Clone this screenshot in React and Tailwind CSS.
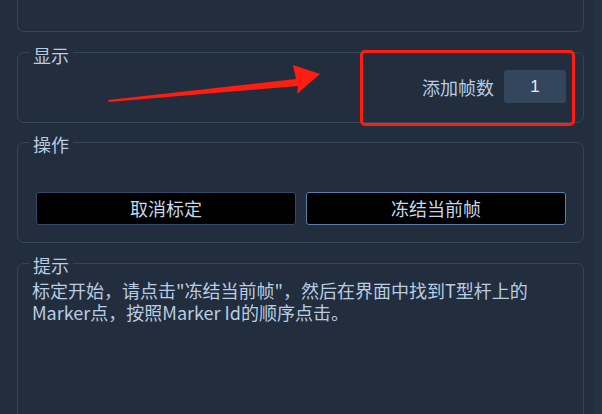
export default function App() {
  const font = { fontFamily: '"Noto Sans CJK SC", "Noto Sans", sans-serif' };
  return (
    <div className="relative flex w-[602px] h-[414px] overflow-hidden bg-[#222e3d] text-[#b8cce2]" style={font}>
      <div className="flex flex-col flex-1 pl-[17px] pr-[10px]">
        {/* top (cut off) group */}
        <div className="shrink-0 h-[32px] border-x border-b border-[#34455a] rounded-b-[7px]" />

        {/* 显示 */}
        <div className="shrink-0 relative mt-[20px] h-[71px] border border-[#34455a] rounded-[7px]">
          <span className="absolute left-[11px] top-[-10px] px-[4px] bg-[#222e3d] text-[18px] leading-[24px]">显示</span>
          <div className="flex justify-end items-center gap-[10px] pt-[17px] pr-[17px]">
            <span className="text-[18px] leading-[24px]">添加帧数</span>
            <div className="w-[62px] h-[33px] rounded-[3px] bg-[#34465b] flex items-center justify-center text-[17px] text-[#e6eef7]" style={{ fontFamily: '"Liberation Sans", sans-serif' }}>1</div>
          </div>
          <div className="absolute left-[342px] top-[-3px] w-[215px] h-[76px] border-[3px] border-[#ff1c10] rounded-[5px]" />
        </div>

        {/* 操作 */}
        <div className="shrink-0 relative mt-[19px] h-[101px] border border-[#34455a] rounded-[7px]">
          <span className="absolute left-[11px] top-[-11px] px-[4px] bg-[#222e3d] text-[18px] leading-[24px]">操作</span>
          <div className="flex gap-[10px] pt-[49px] pl-[18px] pr-[17px]">
            <button className="flex-1 h-[33px] bg-black border border-[#33496a] rounded-[3px] text-[18px] text-[#c8d7e8]">取消标定</button>
            <button className="flex-1 h-[33px] bg-black border border-[#5a7fa8] rounded-[3px] text-[18px] text-[#c8d7e8]">冻结当前帧</button>
          </div>
        </div>

        {/* 提示 */}
        <div className="shrink-0 relative mt-[20px] h-[200px] border border-[#34455a] rounded-[7px]">
          <span className="absolute left-[11px] top-[-11px] px-[4px] bg-[#222e3d] text-[18px] leading-[24px]">提示</span>
          <p className="pt-[15px] pl-[14px] pr-[20px] text-[18px] leading-[22px]">
            标定开始，请点击"冻结当前帧"，然后在界面中找到T型杆上的<br />Marker点，按照Marker Id的顺序点击。
          </p>
        </div>
      </div>
      <div className="w-[8px] bg-[#253241]" />

      <svg className="absolute left-0 top-0 pointer-events-none" width="602" height="414">
        <polygon fill="#ff1c10" points="108,100 296,79 293,65 320,74 297,94 298,86 109,102" />
      </svg>
    </div>
  );
}
